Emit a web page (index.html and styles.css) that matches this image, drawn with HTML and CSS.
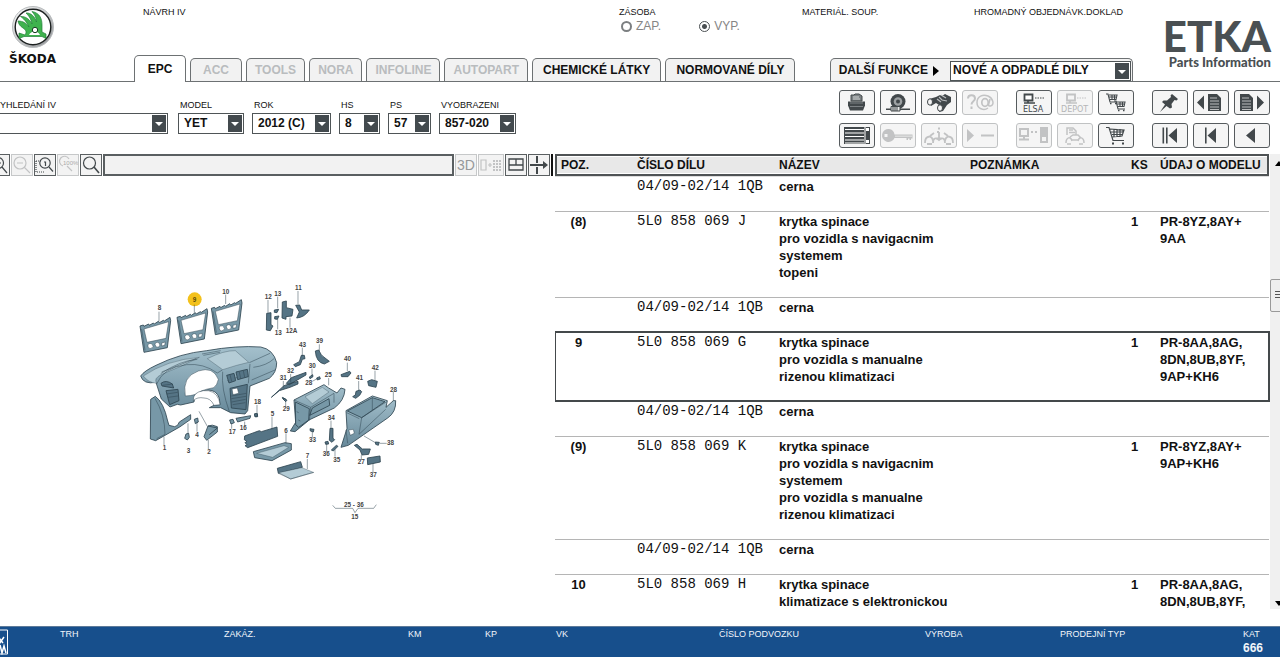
FILE: index.html
```html
<!DOCTYPE html>
<html lang="cs">
<head>
<meta charset="utf-8">
<title>ETKA – Parts Information</title>
<link rel="stylesheet" href="styles.css">
</head>
<body>
<header class="header">
  <div class="brand">
    <svg class="brand-mark" viewBox="0 0 44 44" aria-hidden="true">
      <defs>
        <linearGradient id="ring" x1="0" y1="0" x2="1" y2="1"><stop offset="0" stop-color="#fff"/><stop offset=".5" stop-color="#c4c6c8"/><stop offset="1" stop-color="#8a8d90"/></linearGradient>
      </defs>
      <circle cx="22" cy="22" r="20.5" fill="url(#ring)" stroke="#b9bcbe" stroke-width="1"/>
      <circle cx="22" cy="22" r="17.800" fill="#fff" stroke="#1c2020" stroke-width="1.400"/>
      <path d="M14 30 C16 27 15 25 12 23 C9 21 7.500 19 7 16 C12 16 15 18 18 22 C15 16 12 13 9.500 11.500 C15 11 19 15 21 19 C20 13 17 10 15 8 C20 7.500 24 12 25.500 17 C25.500 12 23 9 21 6.500 C29 8 31 14 31 20 L31 27 L35 29 L35 33.500 L31 31.500 L13 31.500 L8 33.500 L8 28 Z" fill="#3fb24e" stroke="#23803a" stroke-width=".7"/>
      <path d="M18 30a6 6 0 0 1 11 0z" fill="#fff"/>
      <circle cx="24" cy="25" r="2.700" fill="#fff" stroke="#163d20" stroke-width="1"/>
    </svg>
    <span class="brand-name">ŠKODA</span>
  </div>

  <div class="header-main">
    <div class="info-row">
      <span>NÁVRH IV</span>
      <fieldset class="stock">
        <legend>ZÁSOBA</legend>
        <label><input type="radio" name="stock"> ZAP.</label>
        <label><input type="radio" name="stock" checked> VYP.</label>
      </fieldset>
      <span>MATERIÁL. SOUP.</span>
      <span>HROMADNÝ OBJEDNÁVK.DOKLAD</span>
    </div>
    <nav class="tabs">
      <button class="tab active">EPC</button>
      <button class="tab" disabled>ACC</button>
      <button class="tab" disabled>TOOLS</button>
      <button class="tab" disabled>NORA</button>
      <button class="tab" disabled>INFOLINE</button>
      <button class="tab" disabled>AUTOPART</button>
      <button class="tab roomy">CHEMICKÉ LÁTKY</button>
      <button class="tab roomy">NORMOVANÉ DÍLY</button>
      <div class="more">
        <label for="more">DALŠÍ FUNKCE</label>
        <svg class="more-arrow" viewBox="0 0 6 10" aria-hidden="true"><path d="M0 0l6 5-6 5z"/></svg>
        <span class="select more-select"><select id="more"><option>NOVÉ A ODPADLÉ DILY</option></select></span>
      </div>
    </nav>
  </div>

  <div class="product">
    <span class="product-name">ETKA</span>
    <span class="product-sub">Parts Information</span>
  </div>
</header>

<section class="toolbar">
  <form class="filters">
    <div class="field field-search"><label for="f1">VYHLEDÁNÍ IV</label><span class="select"><select id="f1"><option></option></select></span></div>
    <div class="field field-model"><label for="f2">MODEL</label><span class="select"><select id="f2"><option>YET</option></select></span></div>
    <div class="field field-year"><label for="f3">ROK</label><span class="select"><select id="f3"><option>2012 (C)</option></select></span></div>
    <div class="field field-hs"><label for="f4">HS</label><span class="select"><select id="f4"><option>8</option></select></span></div>
    <div class="field field-ps"><label for="f5">PS</label><span class="select"><select id="f5"><option>57</option></select></span></div>
    <div class="field field-figure"><label for="f6">VYOBRAZENI</label><span class="select"><select id="f6"><option>857-020</option></select></span></div>
  </form>

  <div class="actions">
    <div class="action-group four">
      <button class="icon-button" aria-label="Tisk"><svg viewBox="1 1 34 23"><path d="M12 11V5h3l1-1h4l3 2v5z" fill="#7b8082" stroke="#42484b"/><path d="M14 7h6M14 9h7" stroke="#e8eaea" stroke-width=".8"/><path d="M9 11.500h17v4l-2 5H11l-2-5z" fill="#42484b"/><path d="M11 13h13M11 16.500h13" stroke="#8d9294" stroke-width=".8"/></svg></button>
      <button class="icon-button" aria-label="Kola"><svg viewBox="1 1 34 23"><circle cx="18" cy="11.500" r="7.500" fill="#42484b"/><circle cx="18" cy="11.500" r="4.300" fill="#9da1a3"/><circle cx="18" cy="11.500" r="2" fill="#42484b"/><path d="M6 18.500h24v1.500H6z" fill="#42484b"/><path d="M11 16.500h9v4.500h-9z" fill="#e9eaea" stroke="#42484b"/><path d="M13 17v4M15 17v4M17 17v4" stroke="#42484b"/></svg></button>
      <button class="icon-button" aria-label="Hledat"><svg viewBox="1 1 34 23"><path d="M8 9l7-2 4-2 2 1 3-2 6 3v5l-4 3-4 6-4 1 0-7-3-2-5 3z" fill="#42484b"/><path d="M18 7l3 3 5 1M20 5l5 3M16 9l4 3" stroke="#babdbf" stroke-width="1.200" fill="none"/><ellipse cx="9" cy="12" rx="2.500" ry="3.200" fill="#f4f4f4" stroke="#42484b"/><ellipse cx="19" cy="18" rx="2.500" ry="3.200" fill="#f4f4f4" stroke="#42484b"/></svg></button>
      <button class="icon-button" aria-label="Dotaz" disabled><svg viewBox="1 1 34 23" fill="none" stroke="#c2c3c4" stroke-width="2"><path d="M6 8.500C6 4 13 4 13 8.500c0 3-3.500 2.500-3.500 6M9.500 16.500v2.500"/><path d="M26 18c-4 3-11 1-11-5.500S21 4 26 6s7 9 2.500 10c-2.500.5-2-1.500-1.500-3l1-4" stroke-width="1.500"/><ellipse cx="23" cy="12.500" rx="3.200" ry="3.800" stroke-width="1.700"/></svg></button>
      <button class="icon-button" aria-label="Seznam"><svg viewBox="1 1 34 23"><path d="M5 4h26v17H5z" fill="#42484b"/><path d="M6 6.500h19M6 10h19M6 13.500h19M6 17h19M6 20h19" stroke="#fff" stroke-width="1.200"/><path d="M26 4v17" stroke="#fff"/><path d="M27 5h3v3h-3zM27 17h3v3h-3z" fill="#fff"/></svg></button>
      <button class="icon-button" aria-label="Klíč" disabled><svg viewBox="1 1 34 23" fill="#c2c3c4"><path d="M9 6a6.500 6.500 0 1 0 5.500 9h12v2h1.500v-1.500h1.500V17H31v-1.500h1.500v-4H14.500A6.500 6.500 0 0 0 9 6zM4.500 11h3v3h-3zM15 12.800h17v.8H15z" fill-rule="evenodd"/></svg></button>
      <button class="icon-button" aria-label="Informace o vozidle" disabled><svg viewBox="1 1 34 23" fill="none" stroke="#c2c3c4" stroke-width="1.800"><path d="M18 9v6M16 9h2M15.500 15.500h5"/><path d="M17 5.500h2" stroke-width="2"/><path d="M4 20c0-8 7-8 8-2M9 13l4-3M6 21h5M12 20c0-5 3-6 6-3 3-3 6-2 6 3M32 20c0-8-7-8-8-2M27 13l-4-3M25 21h5"/></svg></button>
      <button class="icon-button" aria-label="Přehrát" disabled><svg viewBox="1 1 34 23" fill="#c2c3c4"><path d="M5 6l7 6.500L5 19zM19 11.500h13v2H19z"/></svg></button>
    </div>
    <div class="action-group three">
      <button class="icon-button" aria-label="Elsa"><svg viewBox="1 1 34 23"><path d="M8.500 4.500h8v6h-8z" fill="#fff" stroke="#42484b" stroke-width="1.800"/><path d="M8 13h11M12 11v2" stroke="#42484b" stroke-width="1.600"/><path d="M19 8h10" stroke="#42484b" stroke-dasharray="1.500 1"/><text x="7" y="22" class="icon-text">ELSA</text></svg></button>
      <button class="icon-button" aria-label="Depot" disabled><svg viewBox="1 1 34 23"><path d="M10 4.500h8v6h-8z" fill="none" stroke="#c2c3c4" stroke-width="1.800"/><path d="M9 13h11M13 11v2" stroke="#c2c3c4" stroke-width="1.600"/><path d="M20 8h9" stroke="#c2c3c4" stroke-dasharray="1.500 1"/><text x="4" y="22" class="icon-text faded">DEPOT</text></svg></button>
      <button class="icon-button" aria-label="Košíky"><svg viewBox="1 1 34 23"><g id="mini-cart" fill="none" stroke="#42484b" stroke-width="1.100"><path d="M8 4h2l2 8h7M11 5h8l-1 4.500h-6M11 7h7M14 5v4M16.500 5v4"/><path d="M12 13.500h1.500M17 13.500h1.500" stroke-width="1.600"/></g><use href="#mini-cart" x="8" y="7"/></svg></button>
      <button class="icon-button" aria-label="Přenos dat" disabled><svg viewBox="1 1 34 23"><path d="M4 6h8v7H4zM25 5h6v14h-6z" fill="#f4f4f4" stroke="#c2c3c4" stroke-width="2"/><path d="M3 16.500h10M8 14v2M15 9h2M19 9h2M26 7h4v6h-4z" stroke="#c2c3c4" stroke-width="2" fill="#c2c3c4"/></svg></button>
      <button class="icon-button" aria-label="Doklad vozidla" disabled><svg viewBox="1 1 34 23" fill="none" stroke="#c2c3c4" stroke-width="1.500"><path d="M10 12V5h6l3 3v4M12 7h4M12 9.500h6"/><path d="M9 20c0-6 5-7 6-2M27 20c0-6-5-7-6-2M15 17h6M13 14l3-2h5l3 3M10 21h4M22 21h4"/></svg></button>
      <button class="icon-button" aria-label="Košík"><svg viewBox="1 1 34 23" fill="none" stroke="#42484b" stroke-width="1.200"><path d="M8 4.500h3l4 13h11M12 6l14 1-2 6-10 1M13 9h12M14 11.500h11M16 6v8M19 6v8M22 6v8M25 7v4"/><path d="M14 20.500h2M24 20.500h2" stroke-width="2.200"/></svg></button>
    </div>
    <div class="action-group three">
      <button class="icon-button" aria-label="Připnout"><svg viewBox="1 1 34 23" fill="#42484b"><path d="M20 4l6 5-1.500 1.500-2-.5-3 4 .5 3.500-2 1L14.500 16 8 22l5-7.500L10 12l1.500-1.500 3.500 0 4-3.500-.5-1.500z"/></svg></button>
      <button class="icon-button" aria-label="Předchozí list"><svg viewBox="1 1 34 23" fill="#42484b"><path d="M4 12.500L11 5.500v14zM15 4h9l4 4v13H15z"/><path d="M17 8h7M17 11h9M17 14h9M17 17h9M17 19.500h9" stroke="#ddd" stroke-width=".8"/></svg></button>
      <button class="icon-button" aria-label="Další list"><svg viewBox="1 1 34 23" fill="#42484b"><path d="M30 12.500L23 5.500v14zM6 4h9l4 4v13H6z"/><path d="M8 8h7M8 11h9M8 14h9M8 17h9M8 19.500h9" stroke="#ddd" stroke-width=".8"/></svg></button>
      <button class="icon-button" aria-label="Na začátek"><svg viewBox="1 1 34 23" fill="#42484b"><path d="M10.500 4.500h1.600v16h-1.600zM14 4.500h1.600v16H14zM16.500 12.500l8.500-7.500v15z"/></svg></button>
      <button class="icon-button" aria-label="O jeden zpět"><svg viewBox="1 1 34 23" fill="#42484b"><path d="M12 4.500h1.600v16H12zM14.500 12.500L23 5v15z"/></svg></button>
      <button class="icon-button" aria-label="Zpět"><svg viewBox="1 1 34 23" fill="#42484b"><path d="M12 12.500L21 5v15z"/></svg></button>
    </div>
  </div>
</section>

<main class="workspace">
  <section class="figure-pane">
    <div class="figure-tools">
      <button class="tool" aria-label="Zvětšit"><svg viewBox="0 0 20 20"><circle cx="9" cy="8" r="5.500"/><path d="M6 8h6M9 5v6M13 12l5 6"/></svg></button>
      <button class="tool" aria-label="Zmenšit" disabled><svg viewBox="0 0 20 20"><circle cx="8" cy="8" r="6"/><path d="M5 8h6M12 12l6 6"/></svg></button>
      <button class="tool" aria-label="Výřez"><svg viewBox="0 0 20 20"><path d="M1 6v11h9M1 6h5" stroke-dasharray="1 1"/><circle cx="10" cy="8" r="5.200"/><path d="M9 7h1.500v4M14 12l4 4.500" /></svg></button>
      <button class="tool" aria-label="Sto procent" disabled><svg viewBox="0 0 20 20"><path d="M5 11a5 5 0 1 1 6-7M9 11l5 5"/><text x="5" y="10" class="tool-text">100%</text></svg></button>
      <button class="tool" aria-label="Lupa"><svg viewBox="0 0 20 20"><circle cx="8.500" cy="8" r="6"/><path d="M13 12l5 6" stroke-width="1.600"/></svg></button>
      <input class="figure-title" type="text" aria-label="Název vyobrazení" readonly>
      <button class="tool tool-3d" disabled>3D</button>
      <button class="tool wide" aria-label="Seznam dílů" disabled><svg viewBox="0 0 24 20"><path d="M2 5h5v10H2zM9 10h4M11 8v4"/><path d="M15 5v11M18 5v11M21 5v11" stroke-width="2" stroke-dasharray="2 1"/></svg></button>
      <button class="tool" aria-label="Rozložení"><svg viewBox="0 0 20 20"><path d="M3 4h14v11H3zM3 10h14M10 4v6" stroke-width="1.300"/></svg></button>
      <button class="tool" aria-label="Rozšířit"><svg viewBox="0 0 20 20"><path d="M8 1v7M8 12v7M1 10h15" stroke-width="2"/><path d="M14 6l5 4-5 4z" fill="#42484b" stroke="none"/></svg></button>
      <span class="splitter"></span>
    </div>

    <svg class="drawing" viewBox="0 176 555 450" preserveAspectRatio="xMinYMin meet" role="img" aria-label="Přístrojová deska">
      <defs>
        <linearGradient id="steel" x1="0" y1="0" x2="0" y2="1"><stop offset="0" stop-color="#a4c0cc"/><stop offset="1" stop-color="#67899a"/></linearGradient>
      </defs>
      <g class="parts" transform="translate(130 280) scale(.33333)">
        <g id="frame">
          <path d="M30 138l10-3 2 4 14-7 2 4 12-7 3 3 12-8 3 4 12-7 3 2 17-11 2 10-10 81-70 14z"/>
          <path class="hole" d="M42 147l74-22-8 50-57 12z"/>
          <path class="hole" d="M54 199a7 6 0 0 1 13-5 7 6 0 0 1-12 9zM75 193a7 6 0 0 1 14 0 7 6 0 0 1-12 6zM95 189l11-3-2 10-9 2z"/>
          <path d="M35 147l10 64" class="line"/>
        </g>
        <use href="#frame" x="111" y="-26"/>
        <use href="#frame" x="214" y="-53"/>
        <circle cx="194" cy="58" r="21" class="callout"/>

        <path fill="url(#steel)" d="M32 288Q42 273 78 256 150 220 230 212 320 196 392 201 430 208 440 248 440 278 418 295L360 318 353 392 345 402 302 398 272 383H238l16-8 16-1-2-19q-8-25-34-25-25 2-40 22l-2 14-40 9-10-2-22 8-26-24-16-50Q40 314 32 288z"/>
        <path class="pale" d="M232 236q50-25 84-24l40 35q-36 8-78 22z"/>
        <path class="pale" d="M40 288Q110 240 208 232 150 262 95 283 70 295 80 310 55 308 40 288z"/>
        <path class="line" d="M92 281q60-40 110-43M95 276l104-41M216 222l56-10M220 226l50-9M80 312q20-50 90-58 50-5 92 25l15-9M278 275q-5 50 20 120M360 252l-5 58M358 248l62-28M370 262q40-5 62-26M292 302l62-20M365 300l70-30"/>
        <path class="hole" d="M166 348Q155 290 205 273q45-15 60 25-3 18-14 25-22 4-37 10-15 14-48 15z"/>
        <path class="hole" d="M190 362q-2-25 30-30 34-4 47 27l3 15-18 2q-10-22-30-22-20-4-32 8z"/>
        <path class="dark" d="M93 310q15-12 34 2l4 12-35-6zM108 332l36-4 3 34-28 12zM290 286l22-6 5 22-20 7zM318 276l34-8 3 22-32 9zM300 325l52-12-4 76-44-5z"/>
        <path class="hole" d="M306 327l16-3 4 16-17 4z"/>
        <path class="line" d="M304 348l45-8M304 356l44-7M305 366l42-8M308 374l38-6M98 316l30-4M110 342l33-5M114 352l30-4M300 284l5 20M328 276l4 20M340 272l4 20"/>

        <path d="M62 358l14-9q25 18 37 74l4 13 17 4q10-1 14-14l34-22v14l-33 23-72 41-16-5z"/>
        <path class="line" d="M75 355q30 50 30 108l-25 13"/>
        <path d="M222 470l12-32q12-6 28 2v16l-32 25zM234 438l28 6-24 20"/>
        <path d="M193 418l10-4 2 12-9 5zM168 462l8-2 2 12-6 8-8-5zM299 420l10-2 4 10-10 4zM318 415l44-8-2 8-37 11zM374 402l8-1 1 9-7 1z"/>
        <path class="line" d="M102 470v25M174 430v32M201 425v30M235 480v28M305 430v16M344 425v12M381 375v24M87 95v30M193 74v24M287 44v28M207 394l25 45"/>
        <text x="83" y="90">8</text><text x="188" y="65" class="dark-text">9</text><text x="277" y="41">10</text>
        <text x="98" y="509">1</text><text x="170" y="519">3</text><text x="196" y="471">4</text><text x="232" y="521">2</text><text x="296" y="462">17</text><text x="329" y="451">16</text><text x="372" y="371">18</text>

        <g transform="translate(390 0)">
          <path class="dark" d="M20 100l13-2v36l6 4-8 14-12-2zM43 90l13-2-5 10-8-1zM44 110l13-2-5 10-8-1zM67 66l12-3v20l20 5-3 20-18 2v8l-12-4zM107 76l12-1 6 15 23 0q-14 22-38 24l8-18z"/>
          <path d="M101 254l17-9 6-19 9 0 2 10-8 2-6 16-15 6zM166 213l10-3q8 17 14 20l18 14-15 8q-25-5-27-39zM243 284l26-10 4 5-9 11h-19zM323 304l12-5 17 5-4 18-22-5zM278 350l8-5 2-11 12-4 5 5-6 11-12 9zM148 291l10-7 1 6-9 6zM170 294l9-4 2 7-9 3zM67 352l11 6v4l-10-6zM34 352l38-35 26-9 16-4v8l-24 10-32 10zM79 310l15-17 44-16v8l-50 29z" class="dark"/>
          <path class="line" d="M24 60v38M53 50v35M53 115v33M90 113v30M114 33v40M127 203v25M178 193v20M262 248v25M345 272v28M296 303v28M156 266v20M157 304l16-9M206 294v22M92 282v25M70 303v20M400 336v30"/>
          <text x="14" y="57">12</text><text x="43" y="48">13</text><text x="44" y="164">13</text><text x="77" y="158">12A</text><text x="105" y="30">11</text><text x="117" y="201">43</text><text x="168" y="189">39</text><text x="252" y="244">40</text><text x="335" y="269">42</text><text x="288" y="300">41</text><text x="146" y="263">30</text><text x="81" y="280">32</text><text x="59" y="301">31</text><text x="136" y="314">28</text><text x="194" y="290">25</text><text x="390" y="336">28</text>
        </g>

        <g transform="translate(330 300)">
          <path fill="url(#steel)" d="M162 60l90-46 14 10 25 15 12-15 12 4q-2 34-32 56l-74 35-44 36-14-2 16-26z"/>
          <path class="pale" d="M195 50l52-28 20 14-50 35z"/>
          <path d="M166 66l42 20-2 34-30 22-9-8zM217 84l50-28 2 20-60 30z"/>
          <path class="line" d="M162 60l50 22 70-42M282 40v28M212 82l-4 40M170 95l6 3M175 120l6 3"/>
          <path fill="url(#steel)" d="M318 92l79-44 45 14-4 20 22-20 7 0q2 34-24 52l-118 82-22 6 18-57z"/>
          <path d="M322 93l75-40 38 12-70 48z"/>
          <path class="line" d="M365 113l-8 50 80-75M365 113l75-48M320 98l38 18M397 52v38M318 150l5 40"/>
          <path class="hole" d="M326 150l14-2 3 12-12 6z"/>
          <path class="dark" d="M14 168l44-16 6 3 47-14 2 28-90 34-8-6 6-3-6-6 6-3-8-6z"/>
          <path d="M40 215l95-27 19 3v19l-58 32-52-9z"/><path class="pale" d="M50 220l82-23 14 5-48 30z"/>
          <path class="dark" d="M112 265l70-20 5 17-72 18z"/><path class="pale" d="M116 278l70-15 34 14-68 20z"/><path class="line" d="M116 280l36 17 70-20"/>
          <path class="dark" d="M270 145l9 0v30l5 4-8 8-8-6zM210 146l12 2-2 8-9-3zM255 186l9-2 2 8-9 1zM274 210l15-14 5 3-14 14zM343 196l8-3 16 14 24 0-5 16-20 2-6-15zM382 234l38-6 1 18-38 8zM406 186l12 1-3 9-8-3zM131 54l10 7-4 4-8-8zM44 101l8 0v8h-8z"/>
          <path class="line" d="M96 110v38M138 160v30M202 237v30M137 63v18M217 155v18M273 122v25M260 190v26M285 208v22M364 225v15M399 250v28M420 190h20M372 168l34 20M278 376l8 9h52l7 13 9-13h47l8-11"/>
          <text x="92" y="108">5</text><text x="133" y="158">6</text><text x="197" y="235">7</text><text x="128" y="94">29</text><text x="207" y="185">33</text><text x="263" y="120">34</text><text x="248" y="229">36</text><text x="280" y="246">35</text><text x="353" y="252">27</text><text x="389" y="292">37</text><text x="441" y="196">38</text>
          <text x="312" y="380">25 - 36</text><text x="334" y="416">15</text>
        </g>
      </g>
    </svg>
  </section>

  <section class="parts-pane">
    <table class="parts-table">
      <colgroup><col class="c-pos"><col class="c-num"><col class="c-name"><col class="c-note"><col class="c-qty"><col class="c-model"></colgroup>
      <thead><tr><th>POZ.</th><th>ČÍSLO DÍLU</th><th>NÁZEV</th><th>POZNÁMKA</th><th>KS</th><th>ÚDAJ O MODELU</th></tr></thead>
      <tbody>
        <tr class="sub first"><td></td><td>04/09-02/14 1QB</td><td>cerna</td><td></td><td></td><td></td></tr>
        <tr><td>(8)</td><td>5L0 858 069 J</td><td>krytka spinace<br>pro vozidla s navigacnim<br>systemem<br>topeni</td><td></td><td>1</td><td>PR-8YZ,8AY+<br>9AA</td></tr>
        <tr><td></td><td>04/09-02/14 1QB</td><td>cerna</td><td></td><td></td><td></td></tr>
        <tr class="selected"><td>9</td><td>5L0 858 069 G</td><td>krytka spinace<br>pro vozidla s manualne<br>rizenou klimatizaci</td><td></td><td>1</td><td>PR-8AA,8AG,<br>8DN,8UB,8YF,<br>9AP+KH6</td></tr>
        <tr class="sub"><td></td><td>04/09-02/14 1QB</td><td>cerna</td><td></td><td></td><td></td></tr>
        <tr><td>(9)</td><td>5L0 858 069 K</td><td>krytka spinace<br>pro vozidla s navigacnim<br>systemem<br>pro vozidla s manualne<br>rizenou klimatizaci</td><td></td><td>1</td><td>PR-8YZ,8AY+<br>9AP+KH6</td></tr>
        <tr><td></td><td>04/09-02/14 1QB</td><td>cerna</td><td></td><td></td><td></td></tr>
        <tr class="last"><td>10</td><td>5L0 858 069 H</td><td>krytka spinace<br>klimatizace s elektronickou</td><td></td><td>1</td><td>PR-8AA,8AG,<br>8DN,8UB,8YF,</td></tr>
      </tbody>
    </table>
    <div class="scrollbar">
      <svg viewBox="0 0 8 5"><path d="M0 5l4-5 4 5z"/></svg>
      <span class="thumb"></span>
      <svg viewBox="0 0 8 5"><path d="M0 0l4 5 4-5z"/></svg>
    </div>
  </section>
</main>

<footer class="status">
  <svg class="status-logo" viewBox="0 0 8 26" aria-hidden="true"><path d="M0 1h7.500v24H0" fill="none" stroke="#fff"/><path d="M-1 15l5-7M-1 9l4 5M0 16l2 8 2-7 2 7" fill="none" stroke="#fff" stroke-width="1.500"/></svg>
  <span>TRH</span><span>ZAKÁZ.</span><span>KM</span><span>KP</span><span>VK</span><span>ČÍSLO PODVOZKU</span><span>VÝROBA</span><span>PRODEJNÍ TYP</span><span>KAT<b>666</b></span>
</footer>
</body>
</html>
```
FILE: styles.css
```css
* { box-sizing: border-box; }

body {
  margin: 0;
  height: 100vh;
  display: flex;
  flex-direction: column;
  overflow: hidden;
  background: #fff;
  color: #111;
  font: 9px/11px "Liberation Sans", Arial, sans-serif;
}

button, select, input { font: inherit; color: inherit; margin: 0; }

/* header */
.header {
  display: grid;
  grid-template-columns: 134px 1fr 147px;
  height: 82px;
  border-bottom: 1px solid #6d7173;
}
.brand {
  display: flex;
  flex-direction: column;
  align-items: center;
  width: 65px;
  padding-top: 5px;
}
.brand-mark { width: 44px; height: 44px; }
.brand-name { font: bold 12px/21px "DejaVu Sans", sans-serif; }

.header-main {
  display: flex;
  flex-direction: column;
  justify-content: space-between;
}
.info-row {
  display: grid;
  grid-template-columns: 476fr 183fr 172fr 159fr;
  padding: 7px 0 0 9px;
}
.stock { display: flex; border: 0; margin: 0; padding: 0; gap: 36px; }
.stock legend { padding: 0; }
.stock label {
  display: flex;
  align-items: center;
  gap: 4px;
  color: #858585;
  font-size: 12px;
  line-height: 17px;
}
.stock input {
  appearance: none;
  width: 11px;
  height: 11px;
  margin-left: 2px;
  border: 2px solid #7c7f81;
  border-radius: 50%;
}
.stock input:checked {
  border-width: 1px;
  border-color: #4a4f52;
  background: radial-gradient(#4a4f52 0 2px, #fff 3px);
}

.tabs { display: flex; align-items: flex-end; gap: 4px; }
.tab {
  min-width: 52px;
  height: 23px;
  padding: 1px 8px 0;
  border: 1px solid #6d7173;
  border-bottom: 0;
  border-radius: 5px 5px 0 0;
  background: #f2f2f2;
  font-size: 12px;
  font-weight: bold;
  white-space: nowrap;
}
.tab.roomy { padding: 1px 10px 0; }
.tab:disabled { color: #b9bcbe; }
.tab.active { height: 27px; margin-bottom: -1px; background: #fff; }
.more {
  display: flex;
  align-items: center;
  gap: 5px;
  height: 23px;
  margin-left: auto;
  padding: 1px 1px 0 8px;
  border: 1px solid #6d7173;
  border-bottom: 0;
  border-radius: 5px 5px 0 0;
  background: #f2f2f2;
  font-size: 12px;
  font-weight: bold;
}
.more-arrow { width: 6px; height: 10px; margin-right: 6px; }
.more .more-select { width: 181px; height: 20px; }
.more .more-select select { padding-left: 2px; }

.product {
  display: flex;
  flex-direction: column;
  align-items: flex-end;
  padding: 17px 9px 0 0;
  color: #4a5053;
}
.product-name { font: 900 42px/38px Lato, sans-serif; }
.product-sub { font: 900 13px/14px Lato, sans-serif; white-space: nowrap; }

/* dropdowns */
.select { position: relative; display: block; height: 21px; }
.select select {
  display: block;
  appearance: none;
  width: 100%;
  height: 100%;
  padding: 0 16px 0 5px;
  border: 1px solid #4f5557;
  border-radius: 0;
  background: #fff;
  font-size: 12px;
  line-height: 17px;
  font-weight: bold;
}
.select::before {
  content: "";
  position: absolute;
  top: 2px;
  right: 2px;
  bottom: 2px;
  width: 14px;
  background: #434a4e;
  pointer-events: none;
}
.select::after {
  content: "";
  position: absolute;
  top: 9px;
  right: 5px;
  border: 4px solid transparent;
  border-top-color: #fff;
  border-bottom: 0;
  pointer-events: none;
}

/* toolbar */
.toolbar {
  display: flex;
  justify-content: space-between;
  padding: 8px 10px 6px 0;
}
.filters { display: flex; gap: 8px; padding-top: 10px; }
.field label { display: block; padding: 0 0 2px 2px; }
.field-search { width: 176px; margin: 0 2px 0 -8px; }
.field-model { width: 66px; }
.field-year { width: 79px; }
.field-hs { width: 41px; }
.field-ps { width: 43px; }
.field-figure { width: 77px; }

.actions { display: flex; gap: 18px; }
.action-group { display: grid; gap: 8px 5px; }
.four { grid-template-columns: repeat(4, 36px); }
.three { grid-template-columns: repeat(3, 36px); }
.icon-button {
  height: 25px;
  padding: 0;
  border: 1px solid #565b5e;
  border-radius: 3px;
  background: #f5f5f5;
}
.icon-button:disabled { border-color: #c0c2c3; }
.icon-button svg { display: block; width: 34px; height: 23px; }
.icon-text { font: 8px "DejaVu Sans", sans-serif; fill: #42484b; }
.icon-text.faded { fill: #b4b6b7; }

/* workspace */
.workspace {
  flex: 1;
  min-height: 0;
  display: grid;
  grid-template-columns: 555fr 725fr;
}
.figure-pane { display: flex; flex-direction: column; min-width: 0; }
.figure-tools { display: flex; gap: 1px; height: 22px; margin-left: -12px; padding-right: 2px; }
.tool {
  flex: none;
  width: 22px;
  padding: 0;
  border: 1px solid #5a5f61;
  background: #f3f3f3;
}
.tool.wide { width: 26px; }
.tool:disabled { border-color: #c6c8c9; }
.tool svg { display: block; width: 100%; height: 20px; fill: none; stroke: #42484b; stroke-width: 1.2; }
.tool:disabled svg { stroke: #c2c3c4; }
.tool .tool-text { font: 6px "Liberation Sans", sans-serif; fill: #aaa; stroke: none; }
.tool-3d { font-size: 14px; color: #96999b; }
.figure-title {
  flex: 1;
  min-width: 0;
  border: 2px solid #5a5f61;
  background: #f2f2f2;
}
.splitter { width: 2px; background: #111; }

.drawing { flex: 1; min-height: 0; width: 100%; }
.parts path { stroke: #2e4450; stroke-width: 2.5; stroke-linejoin: round; }
.parts path:not([fill]) { fill: #7798a7; }
.parts .pale:not([fill]) { fill: #b4ccd6; stroke-width: 1; }
.parts .dark:not([fill]) { fill: #557485; }
.parts .hole:not([fill]) { fill: #fff; stroke-width: 1.5; }
.parts .line:not([fill]) { fill: none; stroke-width: 1.5; }
.callout { fill: #f3c11b; }
.parts text { font: bold 19px "Liberation Sans", sans-serif; fill: #444; }
.parts .dark-text { fill: #5c4a08; }

.parts-pane { display: flex; align-items: flex-start; min-width: 0; overflow: hidden; }
.parts-table {
  flex: 1;
  table-layout: fixed;
  border-spacing: 0;
  font-size: 13px;
  line-height: 17px;
  font-weight: bold;
}
.c-pos { width: 82px; }
.c-num { width: 142px; }
.c-name { width: 191px; }
.c-qty { width: 29px; }
.c-model { width: 109px; }
.parts-table th {
  height: 22px;
  padding: 0;
  border: solid #4f5355;
  border-width: 2px 0;
  background: #e8e8e8;
  box-shadow: inset 0 -1px #fff, inset 0 1px #fff;
  font-size: 12px;
  line-height: 16px;
  text-align: left;
  white-space: nowrap;
}
.parts-table th:first-child { border-left-width: 2px; padding-left: 4px; }
.parts-table th:last-child { border-right-width: 2px; }
.parts-table td {
  padding: 1px 0 16px;
  border-top: 1px solid #b5b5b5;
  vertical-align: top;
}
.parts-table td:first-child { padding-right: 35px; text-align: center; }
.parts-table td:nth-child(2) { font: 14px/17px "Liberation Mono", "Courier New", monospace; }
.parts-table .sub td { border-top-color: transparent; }
.parts-table .first td { border-top-color: #ddd; }
.parts-table .selected { outline: 2px solid #44494b; outline-offset: -1px; }
.parts-table .selected td { border-top-color: transparent; }
.parts-table .last td { padding-bottom: 0; }

.scrollbar {
  align-self: stretch;
  display: flex;
  flex-direction: column;
  justify-content: space-between;
  align-items: center;
  flex: none;
  width: 17px;
  margin: 0 -7px 17px 1px;
  padding: 7px 0 3px;
  background: #f0f0f0;
}
.scrollbar svg { width: 8px; height: 5px; }
.scrollbar .thumb {
  width: 17px;
  height: 33px;
  margin-bottom: 176px;
  border: 1px solid #999;
  border-radius: 2px;
  background: repeating-linear-gradient(#555 0 1px, transparent 1px 3px) center / 7px 9px no-repeat #eee;
}

/* status bar */
.status {
  display: grid;
  grid-template-columns: 60fr 164fr 184fr 77fr 71fr 163fr 206fr 135fr 183fr 37fr;
  height: 31px;
  padding-top: 2px;
  border-top: 1px solid #5d7a99;
  background: #174f8c;
  color: #f1f5fa;
}
.status-logo { width: 8px; height: 26px; }
.status span { white-space: nowrap; }
.status b { display: block; font-size: 12px; line-height: 16px; }
```
